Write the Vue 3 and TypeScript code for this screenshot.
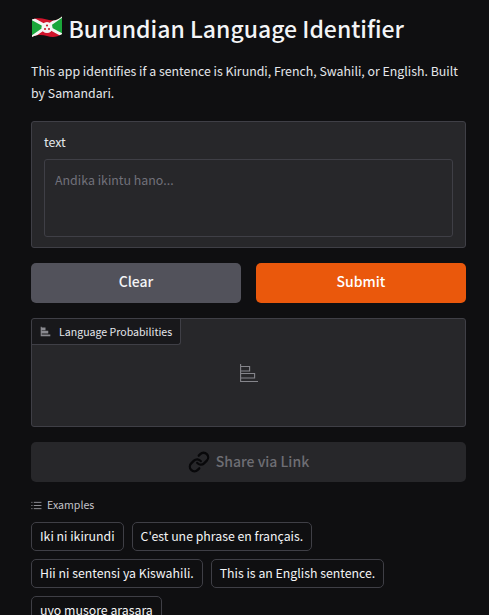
<script setup lang="ts">
const rows: string[][] = [
  ['Iki ni ikirundi', "C'est une phrase en français."],
  ['Hii ni sentensi ya Kiswahili.', 'This is an English sentence.'],
  ['uyo musore arasara'],
]
</script>

<template>
  <div class="page">
    <h1 class="title">
      <svg class="flag" viewBox="0 0 32 24" aria-hidden="true">
        <defs>
          <clipPath id="fl"><path d="M1 4.500C6 2.500 10 3 16 4.500S26 6 31 1.500V19C26 22.500 21 22.500 16 21S6 19.500 1 22Z" /></clipPath>
        </defs>
        <g clip-path="url(#fl)">
          <rect width="32" height="24" fill="#d2142c" />
          <path d="M1 4 16 12 1 22ZM31 1 16 12 31 21Z" fill="#1aa63a" />
          <path d="M1 3.500 31 20M31 1 1 22" stroke="#f4f4f4" stroke-width="3" fill="none" />
          <circle cx="16" cy="12.500" r="5.500" fill="#f4f4f4" />
          <circle cx="16" cy="10.500" r="1.100" fill="#c8202f" />
          <circle cx="14" cy="14" r="1.100" fill="#c8202f" />
          <circle cx="18" cy="14" r="1.100" fill="#c8202f" />
        </g>
      </svg>
      <span>Burundian Language Identifier</span>
    </h1>
    <p class="intro">This app identifies if a sentence is Kirundi, French, Swahili, or English. Built by Samandari.</p>

    <section class="input-card">
      <label class="field-label" for="t">text</label>
      <textarea id="t" class="area" placeholder="Andika ikintu hano..." readonly></textarea>
    </section>

    <div class="actions">
      <button class="btn clear">Clear</button>
      <button class="btn submit">Submit</button>
    </div>

    <section class="output-card">
      <div class="tab">
        <svg class="chart small" viewBox="0 0 16 16" aria-hidden="true">
          <path d="M1 1h1.500v1H8v4H2.500v1H12v4H2.500v1.500H15V15H1z" fill="#8a8a90" />
        </svg>
        <span>Language Probabilities</span>
      </div>
      <div class="empty">
        <svg class="chart big" viewBox="0 0 18 18" fill="none" stroke="#85858b" stroke-width="1.100" aria-hidden="true">
          <path d="M.6 0v17.500H18M.6 2.500h9v4.500H.6M.6 9.500h14V14H.6" />
        </svg>
      </div>
    </section>

    <button class="share">
      <svg class="link" viewBox="0 0 24 24" fill="none" stroke="#08080a" stroke-width="2.500" stroke-linecap="round" stroke-linejoin="round" aria-hidden="true">
        <path d="M10 13a5 5 0 0 0 7.500.5l3-3a5 5 0 0 0-7.100-7.100l-1.700 1.700" />
        <path d="M14 11a5 5 0 0 0-7.500-.5l-3 3a5 5 0 0 0 7.100 7.100l1.700-1.700" />
      </svg>
      <span>Share via Link</span>
    </button>

    <div class="examples-head">
      <svg class="list" viewBox="0 0 12 10" fill="none" stroke="#9a9aa0" aria-hidden="true">
        <path d="M3 1.500h8.500M3 5h8.500M3 8.500h8.500" />
        <path d="M.3 1.500h1.200M.3 5h1.200M.3 8.500h1.200" />
      </svg>
      <span>Examples</span>
    </div>
    <div class="examples">
      <div v-for="(row, i) in rows" :key="i" class="row">
        <button v-for="item in row" :key="item" class="chip">{{ item }}</button>
      </div>
    </div>
  </div>
</template>

<style scoped>
.page {
  box-sizing: border-box;
  width: 489px;
  height: 615px;
  overflow: hidden;
  padding: 11px 23px 0 31px;
  background: #0f0f11;
  color: #f3f4f6;
  font-family: "Noto Sans CJK SC", "Noto Sans", sans-serif;
}
.title {
  display: flex;
  align-items: center;
  gap: 6px;
  margin: 0;
  height: 34px;
  font-size: 23px;
  font-weight: 500;
  line-height: 34px;
  color: #f3f4f6;
}
.title span { margin-left: -0.500px; }
.flag { width: 32px; height: 24px; flex: none; margin-top: -3px; }
.intro {
  margin: 15px 0 0;
  font-size: 12.350px;
  line-height: 22px;
  color: #e5e7eb;
}
.input-card {
  box-sizing: border-box;
  height: 127px;
  margin-top: 17px;
  padding: 10px 12px 10px;
  background: #27272a;
  border: 1px solid #3f3f46;
  border-radius: 3px;
}
.field-label {
  display: block;
  height: 20px;
  font-size: 12.400px;
  line-height: 20px;
  color: #e5e7eb;
}
.area {
  display: block;
  box-sizing: border-box;
  width: 100%;
  height: 78px;
  margin-top: 7px;
  padding: 10px;
  resize: none;
  outline: none;
  background: #27272a;
  border: 1px solid #3f3f46;
  border-radius: 3px;
  color: #e5e7eb;
  font: 12.400px/20px "Noto Sans CJK SC", sans-serif;
}
.area::placeholder { color: #71717a; opacity: 1; }
.actions {
  display: flex;
  gap: 15px;
  margin-top: 15px;
}
.btn {
  flex: 1;
  box-sizing: border-box;
  height: 40px;
  padding: 0 0 3px;
  border: 0;
  border-radius: 5px;
  color: #fff;
  font: 500 14px/37px "Noto Sans CJK SC", sans-serif;
}
.clear { background: #52525b; color: #f3f4f6; }
.submit { background: #ea580c; }
.output-card {
  position: relative;
  box-sizing: border-box;
  height: 109px;
  margin-top: 15px;
  background: #27272a;
  border: 1px solid #3f3f46;
  border-radius: 3px;
}
.tab {
  position: absolute;
  top: 0;
  left: 0;
  display: flex;
  align-items: center;
  gap: 8px;
  box-sizing: border-box;
  height: 26px;
  padding: 0 8px;
  background: #18181b;
  border-right: 1px solid #3f3f46;
  border-bottom: 1px solid #3f3f46;
  border-radius: 3px 0 3px 0;
  color: #e5e7eb;
  font-size: 10.600px;
  line-height: 16px;
}
.chart { display: block; flex: none; }
.chart.small { width: 11px; height: 11px; }
.empty {
  display: flex;
  justify-content: center;
  padding-top: 45px;
}
.chart.big { width: 18px; height: 18px; }
.share {
  display: flex;
  align-items: center;
  justify-content: center;
  gap: 6px;
  box-sizing: border-box;
  width: 100%;
  height: 40px;
  margin-top: 15px;
  padding: 0 0 2px;
  border: 0;
  border-radius: 5px;
  background: #27272a;
  color: #6e6e74;
  font: 500 14px/38px "Noto Sans CJK SC", sans-serif;
}
.link { width: 22px; height: 22px; margin-top: 2px; }
.examples-head {
  display: flex;
  align-items: center;
  gap: 5px;
  margin-top: 14px;
  height: 18px;
  font-size: 10.600px;
  line-height: 18px;
  color: #c4c4ca;
}
.list { width: 11px; height: 9px; }
.examples {
  display: flex;
  flex-direction: column;
  gap: 8px;
  margin-top: 8px;
}
.row { display: flex; gap: 8px; }
.chip {
  box-sizing: border-box;
  height: 29px;
  padding: 0 8px;
  background: #0f0f11;
  border: 1px solid #3f3f46;
  border-radius: 5px;
  color: #f3f4f6;
  font: 12.320px/27px "Noto Sans CJK SC", sans-serif;
  white-space: nowrap;
}
</style>

<style>
html, body { margin: 0; background: #0f0f11; overflow: hidden; }
</style>
